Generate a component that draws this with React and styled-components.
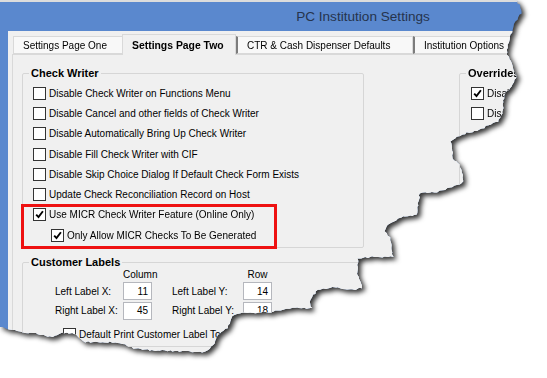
import React from 'react';
import styled, { createGlobalStyle } from 'styled-components';

const Global = createGlobalStyle`
  html, body { margin: 0; padding: 0; background: #fff; }
  body { font-family: "Liberation Sans", Arial, sans-serif; color: #000; }
`;

const Stage = styled.div`
  width: 547px;
  height: 378px;
  overflow: hidden;
  background: #fff;
`;

const Shadow = styled.div`
  width: 726px;
  filter: drop-shadow(3px 3px 2.5px rgba(0, 0, 0, 0.8));
`;

const Window = styled.div`
  width: 726px;
  height: 356px;
  box-sizing: border-box;
  border-top: 2px solid #dcdcdc;
  background: #5a88ce;
  display: flex;
  flex-direction: column;
`;

const TitleBar = styled.div`
  height: 29px;
  flex: none;
  display: flex;
  align-items: center;
  justify-content: center;
  font-size: 13.6px;
  color: #26344d;
`;

const Frame = styled.div`
  flex: 1;
  display: flex;
  padding-left: 8px;
  min-height: 0;
`;

const Client = styled.div`
  flex: 1;
  background: #f0f0f0;
  padding: 5px 0 0 5px;
  display: flex;
  flex-direction: column;
`;

const TabStrip = styled.div`
  display: flex;
  align-items: flex-end;
  height: 18px;
  position: relative;
  z-index: 1;
`;

const Tab = styled.div`
  box-sizing: border-box;
  width: ${(p) => p.$w}px;
  height: ${(p) => (p.$active ? 21 : 18)}px;
  margin: 0 0 ${(p) => (p.$active ? -1 : 0)}px ${(p) => (p.$active ? -2 : 0)}px;
  border: 1px solid #d9d9d9;
  border-bottom: ${(p) => (p.$active ? 'none' : '1px solid #d9d9d9')};
  border-left: ${(p) => (p.$dark ? '2px solid #7c7c7c' : '1px solid #d9d9d9')};
  background: ${(p) => (p.$active ? '#f0f0f0' : '#f8f8f8')};
  position: relative;
  z-index: ${(p) => (p.$active ? 2 : 1)};
  display: flex;
  align-items: center;
  padding-left: 9px;
  font-size: ${(p) => (p.$active ? '10.4px' : '10px')};
  font-weight: ${(p) => (p.$active ? 700 : 400)};
  white-space: nowrap;
  overflow: hidden;
`;

const Panel = styled.div`
  flex: 1;
  margin-left: -1px;
  border: 1px solid #d9d9d9;
  background: #f0f0f0;
  padding: 12px 0 0 9px;
  display: flex;
  align-items: flex-start;
`;

const LeftCol = styled.div`
  width: 342px;
  display: flex;
  flex-direction: column;
`;

const RightCol = styled.div`
  margin-left: 95px;
  width: 70px;
  overflow: hidden;
`;

const Group = styled.fieldset`
  margin: ${(p) => p.$mt || 0}px 0 0 0;
  padding: 0;
  border: 1px solid #d6d6d6;
  border-radius: 2px;
  min-width: 0;
  ${(p) => (p.$h ? `height: ${p.$h}px; box-sizing: border-box;` : '')}
`;

const Legend = styled.legend`
  margin-left: 6px;
  padding: 0 2px;
  font-size: 11px;
  line-height: 13px;
  font-weight: 700;
  white-space: nowrap;
`;

const Rows = styled.div`
  padding: ${(p) => p.$pt ?? 3}px 0 2px ${(p) => p.$pl ?? 10}px;
`;

const Row = styled.label`
  display: flex;
  align-items: center;
  gap: 3px;
  height: 20.3px;
  padding-left: ${(p) => p.$indent || 0}px;
  font-size: 10px;
  white-space: nowrap;
`;

const Box = styled.span`
  box-sizing: border-box;
  width: 13px;
  height: 13px;
  flex: none;
  border: 1px solid #333;
  background: #fff;
  display: flex;
  align-items: center;
  justify-content: center;
`;

const Highlight = styled.div`
  position: relative;
  &::after {
    content: '';
    position: absolute;
    inset: -1px 86px -4px -12px;
    border: 3px solid #ee1111;
    pointer-events: none;
  }
`;

const LabelsGrid = styled.div`
  display: grid;
  grid-template-columns: 68px 29px 20px 71px 29px;
  grid-template-rows: 12px 18px 18px;
  row-gap: 1.5px;
  padding-left: 32px;
  font-size: 10px;
`;

const ColHead = styled.div`
  grid-column: ${(p) => p.$col};
  text-align: center;
  line-height: 12px;
  white-space: nowrap;
`;

const FieldLabel = styled.div`
  grid-column: ${(p) => p.$col};
  align-self: center;
  white-space: nowrap;
`;

const NumInput = styled.div`
  grid-column: ${(p) => p.$col};
  box-sizing: border-box;
  border: 1px solid #b5b7bd;
  background: #fff;
  display: flex;
  align-items: center;
  justify-content: flex-end;
  padding-right: 3px;
  font-size: 10px;
`;

const Check = ({ checked }) => (
  <Box>
    {checked && (
      <svg width="9" height="9" viewBox="0 0 9 9">
        <path d="M1.2 4.6 L3.5 7.1 L7.9 1.3" fill="none" stroke="#000" strokeWidth="1.9" />
      </svg>
    )}
  </Box>
);

const CheckRow = ({ label, checked, indent }) => (
  <Row $indent={indent}>
    <Check checked={checked} />
    <span>{label}</span>
  </Row>
);

const EDGE = [
  [517, 0], [518, 3], [521, 8], [521, 13], [517, 20], [513, 27], [510, 37], [507, 45], [507, 55],
  [512, 63], [515, 72], [516, 78], [512, 87], [505, 93], [503, 100], [503, 113], [498, 122],
  [488, 125], [480, 130], [467, 133], [457, 137], [450, 141], [452, 148], [453, 158], [460, 165],
  [463, 178], [462, 183], [452, 187], [437, 192], [420, 193], [418, 205], [417, 215], [403, 217],
  [392, 222], [386, 226], [385, 232], [390, 238], [393, 257], [383, 257], [370, 257], [358, 258],
  [357, 272], [362, 288], [350, 290], [333, 287], [318, 290], [313, 295], [310, 302], [312, 308],
  [297, 308], [280, 310], [270, 312], [253, 313], [240, 313], [233, 316], [228, 328], [218, 335],
  [213, 345], [205, 352], [175, 351], [150, 350], [133, 348], [127, 345], [110, 342], [85, 342],
  [78, 337], [72, 333], [62, 333], [50, 337], [33, 333], [20, 332], [10, 329], [0, 327],
];

function tornClip() {
  let s = 12345;
  const rnd = () => {
    s = (s * 16807) % 2147483647;
    return s / 2147483647;
  };
  const out = [[0, 0]];
  for (let i = 0; i < EDGE.length - 1; i++) {
    const [x1, y1] = EDGE[i];
    const [x2, y2] = EDGE[i + 1];
    const len = Math.hypot(x2 - x1, y2 - y1);
    const n = Math.max(1, Math.round(len / 2.5));
    for (let k = 0; k < n; k++) {
      const t = k / n;
      let x = x1 + (x2 - x1) * t;
      let y = y1 + (y2 - y1) * t;
      if (i > 0 || k > 0) {
        x += (rnd() - 0.5) * 1.6;
        y += (rnd() - 0.5) * 1.6;
      }
      out.push([x, y]);
    }
  }
  out.push(EDGE[EDGE.length - 1]);
  return `polygon(${out.map(([x, y]) => `${x.toFixed(1)}px ${y.toFixed(1)}px`).join(', ')})`;
}

const CLIP = tornClip();

const checkWriterItems = [
  'Disable Check Writer on Functions Menu',
  'Disable Cancel and other fields of Check Writer',
  'Disable Automatically Bring Up Check Writer',
  'Disable Fill Check Writer with CIF',
  'Disable Skip Choice Dialog If Default Check Form Exists',
  'Update Check Reconciliation Record on Host',
];

const overrideItems = [
  { label: 'Disable', checked: true },
  { label: 'Disable', checked: false },
];

export default function App() {
  return (
    <>
      <Global />
      <Stage>
        <Shadow>
          <Window style={{ clipPath: CLIP }}>
            <TitleBar>PC Institution Settings</TitleBar>
            <Frame>
              <Client>
                <TabStrip>
                  <Tab $w={111}>Settings Page One</Tab>
                  <Tab $w={114} $active>Settings Page Two</Tab>
                  <Tab $w={177} $dark>CTR &amp; Cash Dispenser Defaults</Tab>
                  <Tab $w={150} $dark>Institution Options</Tab>
                </TabStrip>
                <Panel>
                  <LeftCol>
                    <Group>
                      <Legend>Check Writer</Legend>
                      <Rows>
                        {checkWriterItems.map((t) => (
                          <CheckRow key={t} label={t} />
                        ))}
                        <Highlight>
                          <CheckRow label="Use MICR Check Writer Feature (Online Only)" checked />
                          <CheckRow label="Only Allow MICR Checks To Be Generated" checked indent={18} />
                        </Highlight>
                      </Rows>
                    </Group>
                    <Group $mt={7.5}>
                      <Legend>Customer Labels</Legend>
                      <LabelsGrid>
                        <ColHead $col={2}>Column</ColHead>
                        <ColHead $col={5}>Row</ColHead>
                        <FieldLabel $col={1}>Left Label X:</FieldLabel>
                        <NumInput $col={2}>11</NumInput>
                        <FieldLabel $col={4}>Left Label Y:</FieldLabel>
                        <NumInput $col={5}>14</NumInput>
                        <FieldLabel $col={1}>Right Label X:</FieldLabel>
                        <NumInput $col={2}>45</NumInput>
                        <FieldLabel $col={4}>Right Label Y:</FieldLabel>
                        <NumInput $col={5}>18</NumInput>
                      </LabelsGrid>
                      <Rows $pl={40} $pt={4}>
                        <CheckRow label="Default Print Customer Label To" />
                      </Rows>
                    </Group>
                  </LeftCol>
                  <RightCol>
                    <Group $h={130}>
                      <Legend>Overrides</Legend>
                      <Rows $pl={11}>
                        {overrideItems.map((o, i) => (
                          <CheckRow key={i} label={o.label} checked={o.checked} />
                        ))}
                      </Rows>
                    </Group>
                  </RightCol>
                </Panel>
              </Client>
            </Frame>
          </Window>
        </Shadow>
      </Stage>
    </>
  );
}
